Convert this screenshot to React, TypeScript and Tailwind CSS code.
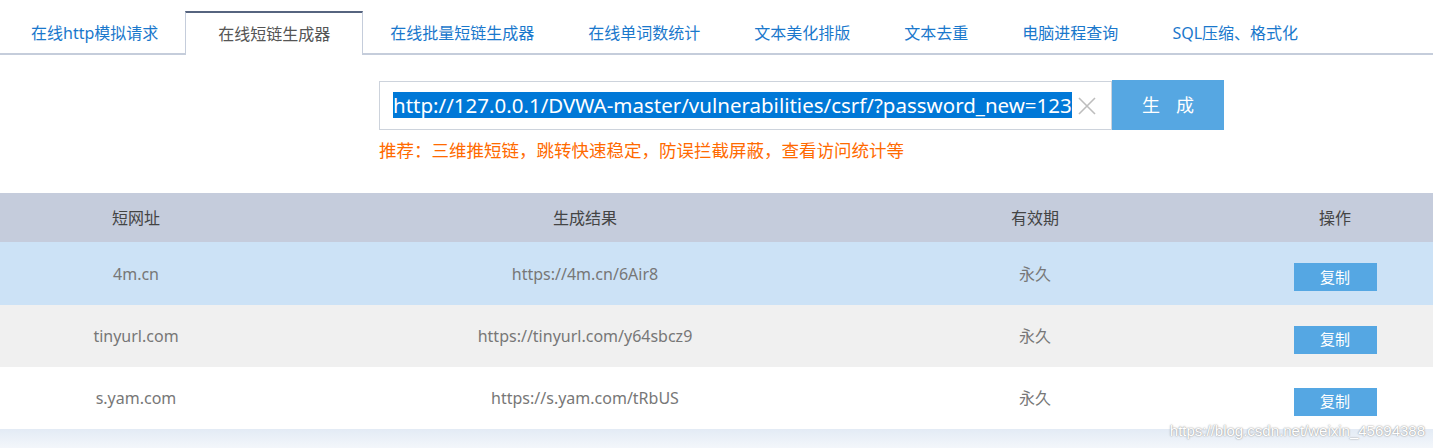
import React from "react"

const tabs = [
  "在线http模拟请求",
  "在线短链生成器",
  "在线批量短链生成器",
  "在线单词数统计",
  "文本美化排版",
  "文本去重",
  "电脑进程查询",
  "SQL压缩、格式化",
]

const rows = [
  { site: "4m.cn", url: "https://4m.cn/6Air8", bg: "bg-[#cce2f6]", h: "h-[63px]" },
  { site: "tinyurl.com", url: "https://tinyurl.com/y64sbcz9", bg: "bg-[#f0f0f0]", h: "h-[62px]" },
  { site: "s.yam.com", url: "https://s.yam.com/tRbUS", bg: "bg-white", h: "h-[62px]" },
]

const font = { fontFamily: '"Noto Sans", "Noto Sans CJK SC", sans-serif' }

export default function App() {
  return (
    <div className="relative w-[1433px] h-[448px] overflow-hidden bg-white" style={font}>
      {/* tabs */}
      <div className="flex items-end h-[55px] border-b-2 border-[#c5cddb] pl-[4px]">
        {tabs.map((t, i) =>
          i === 1 ? (
            <div
              key={t}
              className="h-[44px] -mb-[2px] flex items-center px-[32px] bg-white border-t-2 border-t-[#56647f] border-x border-x-[#c5cddb] text-[16px] text-[#555] whitespace-nowrap"
            >
              {t}
            </div>
          ) : (
            <div
              key={t}
              className="h-[44px] -mb-[2px] flex items-center px-[27px] text-[16px] text-[#1a78cc] whitespace-nowrap"
            >
              {t}
            </div>
          )
        )}
      </div>

      {/* input */}
      <div className="ml-[379px] mt-[26px]">
        <div className="flex">
          <div className="w-[733px] h-[49px] border border-[#cdd3dc] flex items-center pl-[13px] pr-[14px]">
            <div className="w-[680px] overflow-hidden whitespace-nowrap leading-[26px]">
              <span className="bg-[#0078d7] text-white text-[20.5px] leading-[26px] inline-block">
                http://127.0.0.1/DVWA-master/vulnerabilities/csrf/?password_new=123
              </span>
            </div>
            <svg width="20" height="20" viewBox="0 0 20 20" className="ml-[5px] shrink-0">
              <path d="M2 2L18 18M18 2L2 18" stroke="#bdbdbd" strokeWidth="1.6" />
            </svg>
          </div>
          <button className="w-[112px] h-[50px] -mt-[1px] bg-[#56a7e2] text-white text-[18px] flex items-center justify-center gap-[16px]">
            <span>生</span>
            <span>成</span>
          </button>
        </div>
        <div className="mt-[8px] text-[17.5px] leading-[24px] text-[#ff6a00] whitespace-nowrap">
          推荐：三维推短链，跳转快速稳定，防误拦截屏蔽，查看访问统计等
        </div>
      </div>

      {/* table */}
      <div className="mt-[31px] w-[1498px]">
        <div className="grid grid-cols-[272px_626px_274px_326px] h-[49px] bg-[#c5ccdc] text-[16px] text-[#444] items-center text-center">
          <div>短网址</div>
          <div>生成结果</div>
          <div>有效期</div>
          <div>操作</div>
        </div>
        {rows.map((r) => (
          <div
            key={r.site}
            className={`grid grid-cols-[272px_626px_274px_326px] ${r.h} ${r.bg} text-[16px] text-[#777] items-center text-center`}
          >
            <div>{r.site}</div>
            <div>{r.url}</div>
            <div>永久</div>
            <div className="flex justify-center pt-[7px]">
              <button className="w-[83px] h-[28px] bg-[#55a7e3] text-white text-[15px]">复制</button>
            </div>
          </div>
        ))}
        <div className="h-[20px] bg-gradient-to-b from-[#e3ebf5] to-[#f4f7fb]" />
      </div>

      <div
        className="absolute right-[8px] bottom-[6px] text-[15px] text-white whitespace-nowrap"
        style={{ fontFamily: '"Liberation Sans", sans-serif', textShadow: "0 0 2px #999, 0 0 1px #aaa" }}
      >
        https://blog.csdn.net/weixin_45694388
      </div>
    </div>
  )
}
